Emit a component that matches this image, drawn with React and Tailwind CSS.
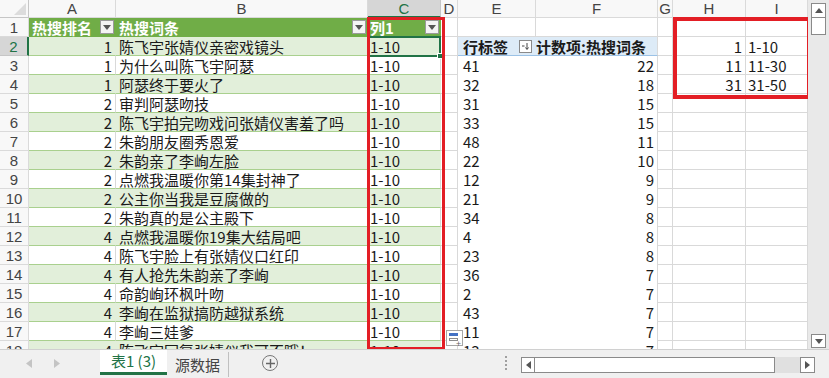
import React from 'react';

const tableRows = [
  [1, '陈飞宇张婧仪亲密戏镜头'],
  [1, '为什么叫陈飞宇阿瑟'],
  [1, '阿瑟终于要火了'],
  [2, '审判阿瑟吻技'],
  [2, '陈飞宇拍完吻戏问张婧仪害羞了吗'],
  [2, '朱韵朋友圈秀恩爱'],
  [2, '朱韵亲了李峋左脸'],
  [2, '点燃我温暖你第14集封神了'],
  [2, '公主你当我是豆腐做的'],
  [2, '朱韵真的是公主殿下'],
  [4, '点燃我温暖你19集大结局吧'],
  [4, '陈飞宇脸上有张婧仪口红印'],
  [4, '有人抢先朱韵亲了李峋'],
  [4, '命韵峋环枫叶吻'],
  [4, '李峋在监狱搞防越狱系统'],
  [4, '李峋三娃爹'],
  [4, '陈飞宇回复张婧仪我可不哦！'],
];

// pivot rows start at sheet row 3
const pivot = [
  [41, 22], [32, 18], [31, 15], [33, 15], [48, 11], [22, 10], [12, 9], [21, 9],
  [34, 8], [4, 8], [23, 8], [36, 7], [2, 7], [43, 7], [11, 7], [13, 7],
];

const lookup = { 2: [1, '1-10'], 3: [11, '11-30'], 4: [31, '31-50'] };

const FONT = { fontFamily: '"Noto Sans CJK SC", "Liberation Sans", sans-serif' };
const HEAD_FONT = { fontFamily: '"Liberation Sans", sans-serif' };

const DropBtn = () => (
  <span className="ml-auto mr-[2px] w-[14px] h-[14px] shrink-0 bg-[#f4f4f4] border border-[#9a9a9a] flex items-center justify-center">
    <svg width="8" height="5" viewBox="0 0 8 5"><path d="M0 0h8L4 5z" fill="#555" /></svg>
  </span>
);

const SortBtn = () => (
  <span className="ml-auto mr-[4px] w-[13px] h-[13px] shrink-0 bg-white border border-[#8a8a8a] flex items-center justify-center">
    <svg width="9" height="9" viewBox="0 0 9 9">
      <path d="M1 4h2.5" stroke="#444" strokeWidth="1" />
      <path d="M6 1v6M4.5 5.5L6 7.5 7.5 5.5" stroke="#444" strokeWidth="1" fill="none" />
    </svg>
  </span>
);

const grid = 'border-r border-b border-[#d9d9d9] bg-white';

function Row({ r }) {
  const t = tableRows[r - 2];
  const band = r % 2 === 0;
  const tcls = band
    ? 'border-r border-b border-r-[#e2efda] border-b-[#a9d08e] bg-[#e2efda]'
    : 'border-r border-b border-r-[#d9d9d9] border-b-[#a9d08e] bg-white';
  const active = r === 2;
  const pv = pivot[r - 3];
  const lk = lookup[r];
  return (
    <>
      <div
        className={
          active
            ? 'border-b border-r-2 border-b-[#c6c6c6] border-r-[#217346] bg-[#d6d6d6] text-[#217346] flex items-center justify-center text-[15px]'
            : 'border-b border-r border-[#dadada] bg-[#f8f8f8] text-[#444] flex items-center justify-center text-[15px]'
        }
        style={HEAD_FONT}
      >
        {r}
      </div>
      <div className={`${tcls} text-right pr-[3px] whitespace-nowrap`}>{t[0]}</div>
      <div className={`${tcls} pl-[3px] whitespace-nowrap`}>{t[1]}</div>
      <div className={`${tcls} pl-[2px] whitespace-nowrap`}>1-10</div>
      <div className={grid}></div>
      {r === 2 ? (
        <>
          <div className="border-b border-[#9bc2e6] bg-[#ddebf7] font-bold pl-[5px] flex items-center whitespace-nowrap">
            行标签<SortBtn />
          </div>
          <div className="border-b border-r border-b-[#9bc2e6] border-r-[#d9d9d9] bg-[#ddebf7] font-bold whitespace-nowrap">
            计数项:热搜词条
          </div>
        </>
      ) : (
        <>
          <div className="bg-white pl-[5px]">{pv[0]}</div>
          <div className="bg-white border-r border-[#d9d9d9] text-right pr-[3px]">{pv[1]}</div>
        </>
      )}
      <div className={grid}></div>
      <div className={`${grid} text-right pr-[3px]`}>{lk ? lk[0] : ''}</div>
      <div className={`${grid} pl-[2px]`}>{lk ? lk[1] : ''}</div>
    </>
  );
}

export default function App() {
  const letters = ['A', 'B', 'C', 'D', 'E', 'F', 'G', 'H', 'I'];
  return (
    <div className="w-[829px] h-[378px] overflow-hidden bg-[#f0f0f0] flex flex-col text-[15px] text-[#1a1a1a]" style={FONT}>
      <div className="flex h-[349px] shrink-0">
        <div className="relative w-[808px] h-[349px] overflow-hidden bg-white">
          <div className="grid grid-cols-[29px_87px_252px_73px_17px_78px_122px_15px_73px_62px] grid-rows-[18px] auto-rows-[19px] leading-[19px]">
            {/* column header */}
            <div className="border-r border-b border-[#c6c6c6] bg-[#f8f8f8] flex items-end justify-end p-[2px]">
              <svg width="12" height="12" viewBox="0 0 12 12"><path d="M12 0v12H0z" fill="#dcdcdc" /></svg>
            </div>
            {letters.map((l) => (
              <div
                key={l}
                className={
                  l === 'C'
                    ? 'border-r border-b-2 border-r-[#c6c6c6] border-b-[#217346] bg-[#d6d6d6] text-[#217346] flex items-center justify-center text-[15px]'
                    : 'border-r border-b border-[#dadada] bg-[#f8f8f8] text-[#444] flex items-center justify-center text-[15px]'
                }
                style={HEAD_FONT}
              >
                {l}
              </div>
            ))}

            {/* row 1 */}
            <div className="border-b border-r border-[#dadada] bg-[#f8f8f8] text-[#444] flex items-center justify-center text-[15px]" style={HEAD_FONT}>
              1
            </div>
            <div className="bg-[#70ad47] text-white font-bold pl-[3px] flex items-center border-b border-[#70ad47]">热搜排名<DropBtn /></div>
            <div className="bg-[#70ad47] text-white font-bold pl-[3px] flex items-center border-b border-[#70ad47]">热搜词条<DropBtn /></div>
            <div className="bg-[#70ad47] text-white font-bold pl-[2px] flex items-center border-b border-[#70ad47]">列1<DropBtn /></div>
            <div className={grid}></div>
            <div className={grid}></div>
            <div className={grid}></div>
            <div className={grid}></div>
            <div className={grid}></div>
            <div className={grid}></div>

            {tableRows.map((_, i) => (
              <Row key={i} r={i + 2} />
            ))}
          </div>

          {/* active cell C2 */}
          <div className="absolute left-[368px] top-[36px] w-[73px] h-[21px] border-2 border-[#217346]"></div>
          <div className="absolute left-[437px] top-[53px] w-[6px] h-[6px] bg-[#217346] border border-white"></div>

          {/* red highlight boxes */}
          <div className="absolute left-[367px] top-[17px] w-[78px] h-[333px] border-[3px] border-[#e31e25]"></div>
          <div className="absolute left-[673px] top-[17px] w-[138px] h-[82px] border-[4px] border-[#e31e25]"></div>

          {/* quick analysis icon */}
          <div className="absolute left-[446px] top-[330px] w-[17px] h-[16px] bg-white border border-[#a6a6a6] flex flex-col p-[2px] gap-[2px]">
            <div className="h-[3px] w-[9px] bg-[#4472c4]"></div>
            <div className="h-[3px] w-[9px] border border-[#8c8c8c]"></div>
            <span className="absolute right-[1px] bottom-[-3px] text-[9px] text-[#666] leading-none">+</span>
          </div>
        </div>

        {/* vertical scrollbar */}
        <div className="w-[21px] h-[349px] bg-[#e9e9e9] flex flex-col items-center pt-[3px]">
          <div className="w-[15px] h-[15px] bg-white border border-[#8a8a8a] flex items-center justify-center">
            <svg width="8" height="5" viewBox="0 0 8 5"><path d="M4 0l4 5H0z" fill="#555" /></svg>
          </div>
          <div className="w-[15px] h-[17px] bg-white border-x border-b border-[#8a8a8a]"></div>
          <div className="flex-1"></div>
          <div className="w-[15px] h-[14px] mb-[1px] bg-white border border-[#8a8a8a] flex items-center justify-center">
            <svg width="8" height="5" viewBox="0 0 8 5"><path d="M0 0h8L4 5z" fill="#555" /></svg>
          </div>
        </div>
      </div>

      {/* sheet tabs */}
      <div className="flex-1 flex items-start bg-[#f0f0f0] border-t border-[#d0d0d0]">
        <div className="w-[100px] h-[27px] flex items-center gap-[22px] pl-[26px]">
          <svg width="6" height="9" viewBox="0 0 6 9"><path d="M6 0v9L0 4.5z" fill="#c4c4c4" /></svg>
          <svg width="6" height="9" viewBox="0 0 6 9"><path d="M0 0v9l6-4.5z" fill="#c4c4c4" /></svg>
        </div>
        <div className="w-[67px] h-[25px] bg-white border-b-[3px] border-[#217346] text-[#217346] flex items-center justify-center text-[15px] leading-[20px]">
          表1 (3)
        </div>
        <div className="w-[62px] h-[25px] flex items-center justify-center text-[#444] text-[15px] leading-[20px] border-r border-[#c0c0c0] mt-[2px]">
          源数据
        </div>
        <div className="ml-[33px] mt-[5px] w-[16px] h-[16px] rounded-full border border-[#777] flex items-center justify-center">
          <svg width="9" height="9" viewBox="0 0 9 9"><path d="M4.5 0v9M0 4.5h9" stroke="#666" strokeWidth="1.4" /></svg>
        </div>
        <div className="ml-[227px] mt-[6px] flex flex-col gap-[2px]">
          <div className="w-[2px] h-[2px] bg-[#a0a0a0]"></div>
          <div className="w-[2px] h-[2px] bg-[#a0a0a0]"></div>
          <div className="w-[2px] h-[2px] bg-[#a0a0a0]"></div>
          <div className="w-[2px] h-[2px] bg-[#a0a0a0]"></div>
        </div>
        <div className="ml-[14px] mt-[7px] w-[294px] h-[16px] flex bg-[#e0e0e0]">
          <div className="w-[14px] h-[16px] bg-white border border-[#8a8a8a] flex items-center justify-center">
            <svg width="5" height="8" viewBox="0 0 5 8"><path d="M5 0v8L0 4z" fill="#555" /></svg>
          </div>
          <div className="w-[240px] h-[16px] bg-white border-y border-r border-[#8a8a8a]"></div>
          <div className="flex-1"></div>
          <div className="w-[15px] h-[16px] bg-white border border-[#8a8a8a] flex items-center justify-center">
            <svg width="5" height="8" viewBox="0 0 5 8"><path d="M0 0v8l5-4z" fill="#555" /></svg>
          </div>
        </div>
      </div>
    </div>
  );
}
